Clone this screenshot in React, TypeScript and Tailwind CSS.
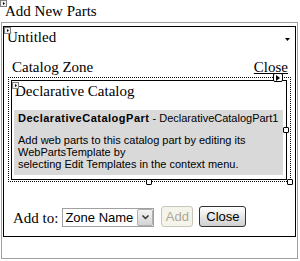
import React from "react";

function Glyph() {
  return (
    <svg width="7" height="7" viewBox="0 0 7 7" className="block">
      <rect x="0.5" y="0.5" width="6" height="6" fill="#f0f0f0" stroke="#808080" />
      <path d="M3 2 L5 3.5 L3 5 Z" fill="#000" />
    </svg>
  );
}

function Handle({ className }: { className: string }) {
  return <div className={"absolute w-[6px] h-[6px] bg-white border border-black rounded-[1px] " + className} />;
}

export default function App() {
  return (
    <div className="w-[300px] h-[261px] bg-white overflow-hidden font-['Liberation_Serif',serif] text-black">
      <div className="relative h-[22px] pl-[5px] text-[15px] leading-[22px]">
        <div className="absolute left-0 top-0">
          <Glyph />
        </div>
        Add New Parts
      </div>
      <div className="ml-[1px] w-[297px] h-[237px] border border-[#a0a0a0]">
        <div className="ml-[1px] mt-[3px] w-[293px] h-[211px] border border-black">
          <div className="relative h-[20px] pl-[3px] text-[15px] leading-[20px]">
            <div className="absolute left-0 top-0">
              <Glyph />
            </div>
            Untitled
            <svg width="5" height="3" viewBox="0 0 5 3" className="absolute right-[5px] top-[11px]">
              <path d="M0 0 H5 L2.5 3 Z" fill="#000" />
            </svg>
          </div>
          <div className="ml-[4px] w-[283px]">
            <div className="mt-[10px] flex justify-between h-[20px] pl-[4px] pr-[3px] text-[15px] leading-[20px]">
              <span>Catalog Zone</span>
              <span className="underline">Close</span>
            </div>
            <div className="relative w-[283px] h-[105px] border border-dotted border-black">
              <div className="ml-[2px] mt-[2px] w-[276px] h-[100px] border border-black">
                <div className="relative h-[20px] pl-[3px] text-[15px] leading-[20px]">
                  <div className="absolute left-0 top-[1px]">
                    <Glyph />
                  </div>
                  Declarative Catalog
                </div>
                <div className="ml-[2px] mt-[9px] w-[269px] h-[65px] bg-[#d9d9d9] pl-[4px] pt-[2px] font-['Liberation_Sans',Arial,sans-serif] text-[11px] leading-[12px]">
                  <div className="whitespace-nowrap">
                    <span className="font-bold tracking-[0.5px]">DeclarativeCatalogPart</span> - DeclarativeCatalogPart1
                  </div>
                  <div className="mt-[10px] whitespace-nowrap">
                    Add web parts to this catalog part by editing its
                    <br />
                    WebPartsTemplate by
                    <br />
                    selecting Edit Templates in the context menu.
                  </div>
                </div>
              </div>
              <div className="absolute right-[7px] top-[-5px] w-[10px] h-[9px] bg-white border border-black rounded-[2px] flex items-center justify-center">
                <svg width="4" height="6" viewBox="0 0 4 6">
                  <path d="M0 0 L4 3 L0 6 Z" fill="#000" />
                </svg>
              </div>
              <Handle className="right-[1px] top-[49px]" />
              <Handle className="right-[-3px] bottom-[-4px]" />
              <Handle className="left-[137px] bottom-[-4px]" />
            </div>
          </div>
          <div className="mt-[24px] flex items-end h-[22px] pl-[9px]">
            <span className="text-[15px] leading-[20px]">Add to:</span>
            <div className="ml-[4px] mb-[1px] flex items-center w-[92px] h-[19px] border border-[#a0a0a0] font-['Liberation_Sans',Arial,sans-serif] text-[13px]">
              <span className="flex-1 pl-[2px] leading-[17px]">Zone Name</span>
              <div className="w-[16px] h-[17px] bg-gradient-to-b from-[#f4f4f4] to-[#d4d4d4] border border-[#b0b0b0] rounded-[2px] flex items-center justify-center">
                <svg width="7" height="5" viewBox="0 0 7 5">
                  <path d="M0.5 0.5 L3.5 3.5 L6.5 0.5" fill="none" stroke="#333" strokeWidth="1.5" />
                </svg>
              </div>
            </div>
            <div className="ml-[7px] mb-[1px] w-[32px] h-[21px] rounded-[3px] border border-[#c9c7ba] bg-[#f5f4ea] text-[#aca899] font-['Liberation_Sans',Arial,sans-serif] text-[13px] flex items-center justify-center">
              Add
            </div>
            <div className="ml-[6px] mb-[1px] w-[47px] h-[21px] rounded-[3px] border border-[#333] bg-gradient-to-b from-[#ffffff] to-[#d0d0d0] font-['Liberation_Sans',Arial,sans-serif] text-[13px] flex items-center justify-center">
              Close
            </div>
          </div>
        </div>
      </div>
    </div>
  );
}
